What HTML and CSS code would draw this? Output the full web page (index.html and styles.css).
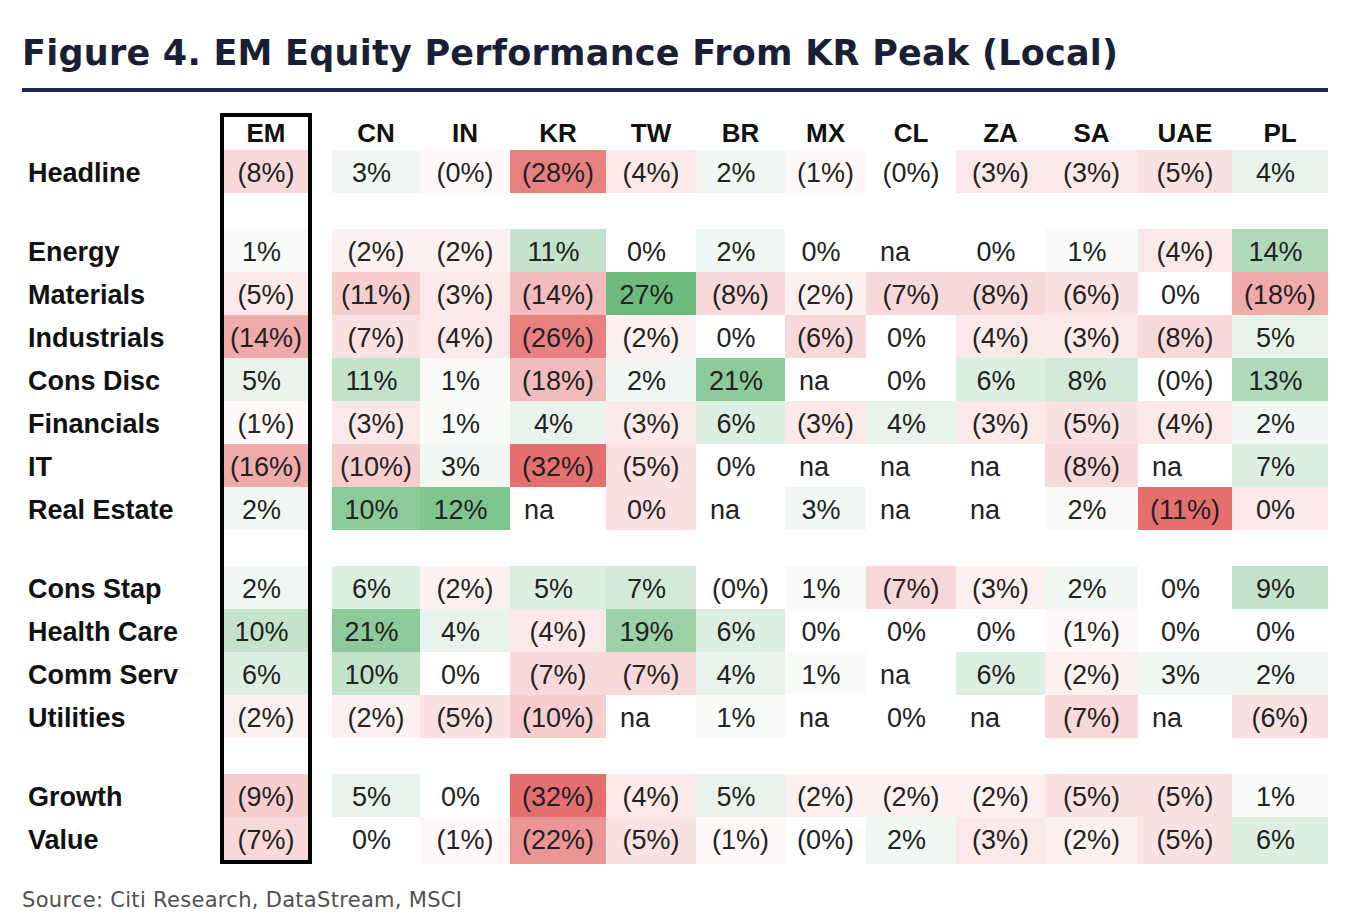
FILE: index.html
```html
<!DOCTYPE html>
<html lang="en">
<head>
<meta charset="utf-8">
<title>Figure 4. EM Equity Performance From KR Peak (Local)</title>
<link rel="stylesheet" href="styles.css">
</head>
<body>
<div class="page">
  <h1 class="title">Figure 4. EM Equity Performance From KR Peak (Local)</h1>
  <div class="rule"></div>
  <div class="table">
    <div class="row head">
      <span class="lab"></span><span class="em">EM</span><span>CN</span><span>IN</span><span>KR</span><span>TW</span><span>BR</span><span>MX</span><span>CL</span><span>ZA</span><span>SA</span><span>UAE</span><span>PL</span>
    </div>
    <div class="row">
      <span class="lab">Headline</span><span class="em r4">(8%)</span><span class="g1 p">3%</span><span class="r0">(0%)</span><span class="r9">(28%)</span><span class="r2">(4%)</span><span class="g1 p">2%</span><span class="r0">(1%)</span><span>(0%)</span><span class="r2">(3%)</span><span class="r2">(3%)</span><span class="r3">(5%)</span><span class="g2 p">4%</span>
    </div>
    <div class="row gap"><span class="lab"></span><span class="em"></span></div>
    <div class="row">
      <span class="lab">Energy</span><span class="em g0 p">1%</span><span class="r1">(2%)</span><span class="r1">(2%)</span><span class="g5 p">11%</span><span class="p">0%</span><span class="g1 p">2%</span><span class="p">0%</span><span class="na">na</span><span class="p">0%</span><span class="g0 p">1%</span><span class="r2">(4%)</span><span class="g6 p">14%</span>
    </div>
    <div class="row">
      <span class="lab">Materials</span><span class="em r2">(5%)</span><span class="r5">(11%)</span><span class="r2">(3%)</span><span class="r6">(14%)</span><span class="g10 p">27%</span><span class="r4">(8%)</span><span class="r1">(2%)</span><span class="r4">(7%)</span><span class="r4">(8%)</span><span class="r3">(6%)</span><span class="p">0%</span><span class="r7">(18%)</span>
    </div>
    <div class="row">
      <span class="lab">Industrials</span><span class="em r7">(14%)</span><span class="r3">(7%)</span><span class="r2">(4%)</span><span class="r9">(26%)</span><span class="r1">(2%)</span><span class="p">0%</span><span class="r4">(6%)</span><span class="p">0%</span><span class="r2">(4%)</span><span class="r2">(3%)</span><span class="r4">(8%)</span><span class="g2 p">5%</span>
    </div>
    <div class="row">
      <span class="lab">Cons Disc</span><span class="em g2 p">5%</span><span class="g5 p">11%</span><span class="g0 p">1%</span><span class="r6">(18%)</span><span class="g1 p">2%</span><span class="g8 p">21%</span><span class="na">na</span><span class="p">0%</span><span class="g3 p">6%</span><span class="g4 p">8%</span><span>(0%)</span><span class="g6 p">13%</span>
    </div>
    <div class="row">
      <span class="lab">Financials</span><span class="em r0">(1%)</span><span class="r2">(3%)</span><span class="g0 p">1%</span><span class="g2 p">4%</span><span class="r2">(3%)</span><span class="g3 p">6%</span><span class="r2">(3%)</span><span class="g2 p">4%</span><span class="r2">(3%)</span><span class="r3">(5%)</span><span class="r2">(4%)</span><span class="g1 p">2%</span>
    </div>
    <div class="row">
      <span class="lab">IT</span><span class="em r7">(16%)</span><span class="r5">(10%)</span><span class="g1 p">3%</span><span class="r10">(32%)</span><span class="r3">(5%)</span><span class="p">0%</span><span class="na">na</span><span class="na">na</span><span class="na">na</span><span class="r4">(8%)</span><span class="na">na</span><span class="g3 p">7%</span>
    </div>
    <div class="row">
      <span class="lab">Real Estate</span><span class="em g1 p">2%</span><span class="g8 p">10%</span><span class="g9 p">12%</span><span class="na">na</span><span class="r3 p">0%</span><span class="na">na</span><span class="g1 p">3%</span><span class="na">na</span><span class="na">na</span><span class="g0 p">2%</span><span class="r10">(11%)</span><span class="r2 p">0%</span>
    </div>
    <div class="row gap"><span class="lab"></span><span class="em"></span></div>
    <div class="row">
      <span class="lab">Cons Stap</span><span class="em g1 p">2%</span><span class="g3 p">6%</span><span class="r1">(2%)</span><span class="g3 p">5%</span><span class="g4 p">7%</span><span>(0%)</span><span class="g0 p">1%</span><span class="r4">(7%)</span><span class="r1">(3%)</span><span class="g1 p">2%</span><span class="p">0%</span><span class="g5 p">9%</span>
    </div>
    <div class="row">
      <span class="lab">Health Care</span><span class="em g5 p">10%</span><span class="g8 p">21%</span><span class="g2 p">4%</span><span class="r2">(4%)</span><span class="g7 p">19%</span><span class="g3 p">6%</span><span class="p">0%</span><span class="p">0%</span><span class="p">0%</span><span class="r0">(1%)</span><span class="p">0%</span><span class="p">0%</span>
    </div>
    <div class="row">
      <span class="lab">Comm Serv</span><span class="em g3 p">6%</span><span class="g5 p">10%</span><span class="p">0%</span><span class="r4">(7%)</span><span class="r4">(7%)</span><span class="g2 p">4%</span><span class="g0 p">1%</span><span class="na">na</span><span class="g3 p">6%</span><span class="r1">(2%)</span><span class="g1 p">3%</span><span class="g1 p">2%</span>
    </div>
    <div class="row">
      <span class="lab">Utilities</span><span class="em r1">(2%)</span><span class="r1">(2%)</span><span class="r3">(5%)</span><span class="r5">(10%)</span><span class="na">na</span><span class="g0 p">1%</span><span class="na">na</span><span class="p">0%</span><span class="na">na</span><span class="r4">(7%)</span><span class="na">na</span><span class="r3">(6%)</span>
    </div>
    <div class="row gap"><span class="lab"></span><span class="em"></span></div>
    <div class="row">
      <span class="lab">Growth</span><span class="em r5">(9%)</span><span class="g2 p">5%</span><span class="p">0%</span><span class="r10">(32%)</span><span class="r2">(4%)</span><span class="g2 p">5%</span><span class="r1">(2%)</span><span class="r1">(2%)</span><span class="r1">(2%)</span><span class="r3">(5%)</span><span class="r3">(5%)</span><span class="g0 p">1%</span>
    </div>
    <div class="row last">
      <span class="lab">Value</span><span class="em r4">(7%)</span><span class="p">0%</span><span class="r0">(1%)</span><span class="r8">(22%)</span><span class="r3">(5%)</span><span class="r0">(1%)</span><span>(0%)</span><span class="g1 p">2%</span><span class="r2">(3%)</span><span class="r1">(2%)</span><span class="r3">(5%)</span><span class="g3 p">6%</span>
    </div>
  </div>
  <p class="source">Source: Citi Research, DataStream, MSCI</p>
</div>
</body>
</html>
```
FILE: styles.css
```css
html, body {
  margin: 0;
  padding: 0;
  background: #ffffff;
}

.page {
  width: 1306px;
  margin-left: 22px;
  padding-top: 33px;
}

.title {
  margin: 0;
  font-family: "DejaVu Sans", Verdana, sans-serif;
  font-weight: bold;
  font-size: 35px;
  letter-spacing: 0.25px;
  line-height: 40px;
  color: #1b1f36;
  white-space: nowrap;
}

.rule {
  margin-top: 15px;
  height: 4px;
  background: #1c2757;
}

.table {
  margin-top: 21px;
  font-family: "Liberation Sans", Arial, sans-serif;
  font-size: 27px;
  color: #222222;
}

.row {
  display: grid;
  grid-template-columns: 198px 92px 20px 88px 90px 96px 90px 89px 81px 90px 89px 93px 94px 96px;
  height: 43px;
}

.row > span {
  display: block;
  box-sizing: border-box;
  height: 100%;
  padding-top: 4px;
  line-height: 39px;
  text-align: center;
  white-space: nowrap;
}

.row > .em + span {
  grid-column-start: 4;
}

.row > .lab {
  text-align: left;
  padding-left: 6px;
  font-weight: bold;
  color: #111111;
}

.row > .em {
  border-left: 4px solid #000000;
  border-right: 4px solid #000000;
}

.row.head {
  height: 37px;
}

.row.head > span {
  font-weight: bold;
  font-size: 26px;
  color: #111111;
  line-height: 33px;
  padding-top: 4px;
}

.row.head > .em {
  border-top: 4px solid #000000;
  padding-top: 0;
}

.row.gap {
  height: 36px;
}

.row.last > .em {
  border-bottom: 4px solid #000000;
}

.row > .p {
  padding-right: 9px;
}

.row > .na {
  text-align: left;
  padding-left: 14px;
}

.r0 { background: #fef8f8; }
.r1 { background: #fdf0f0; }
.r2 { background: #fbe8e8; }
.r3 { background: #fae2e2; }
.r4 { background: #f8d9d9; }
.r5 { background: #f6cece; }
.r6 { background: #f2bcbc; }
.r7 { background: #efaaaa; }
.r8 { background: #eb9494; }
.r9 { background: #e88080; }
.r10 { background: #e56f6f; }

.g0 { background: #f8fbf8; }
.g1 { background: #f1f8f3; }
.g2 { background: #e8f4eb; }
.g3 { background: #ddefe1; }
.g4 { background: #d2ead7; }
.g5 { background: #c3e3ca; }
.g6 { background: #b0daba; }
.g7 { background: #9dd2a9; }
.g8 { background: #8dca9a; }
.g9 { background: #80c590; }
.g10 { background: #6cba7d; }

.source {
  margin: 28px 0 0 0;
  font-family: "DejaVu Sans", Verdana, sans-serif;
  font-size: 21px;
  letter-spacing: 0.3px;
  line-height: 24px;
  color: #505050;
}
```
